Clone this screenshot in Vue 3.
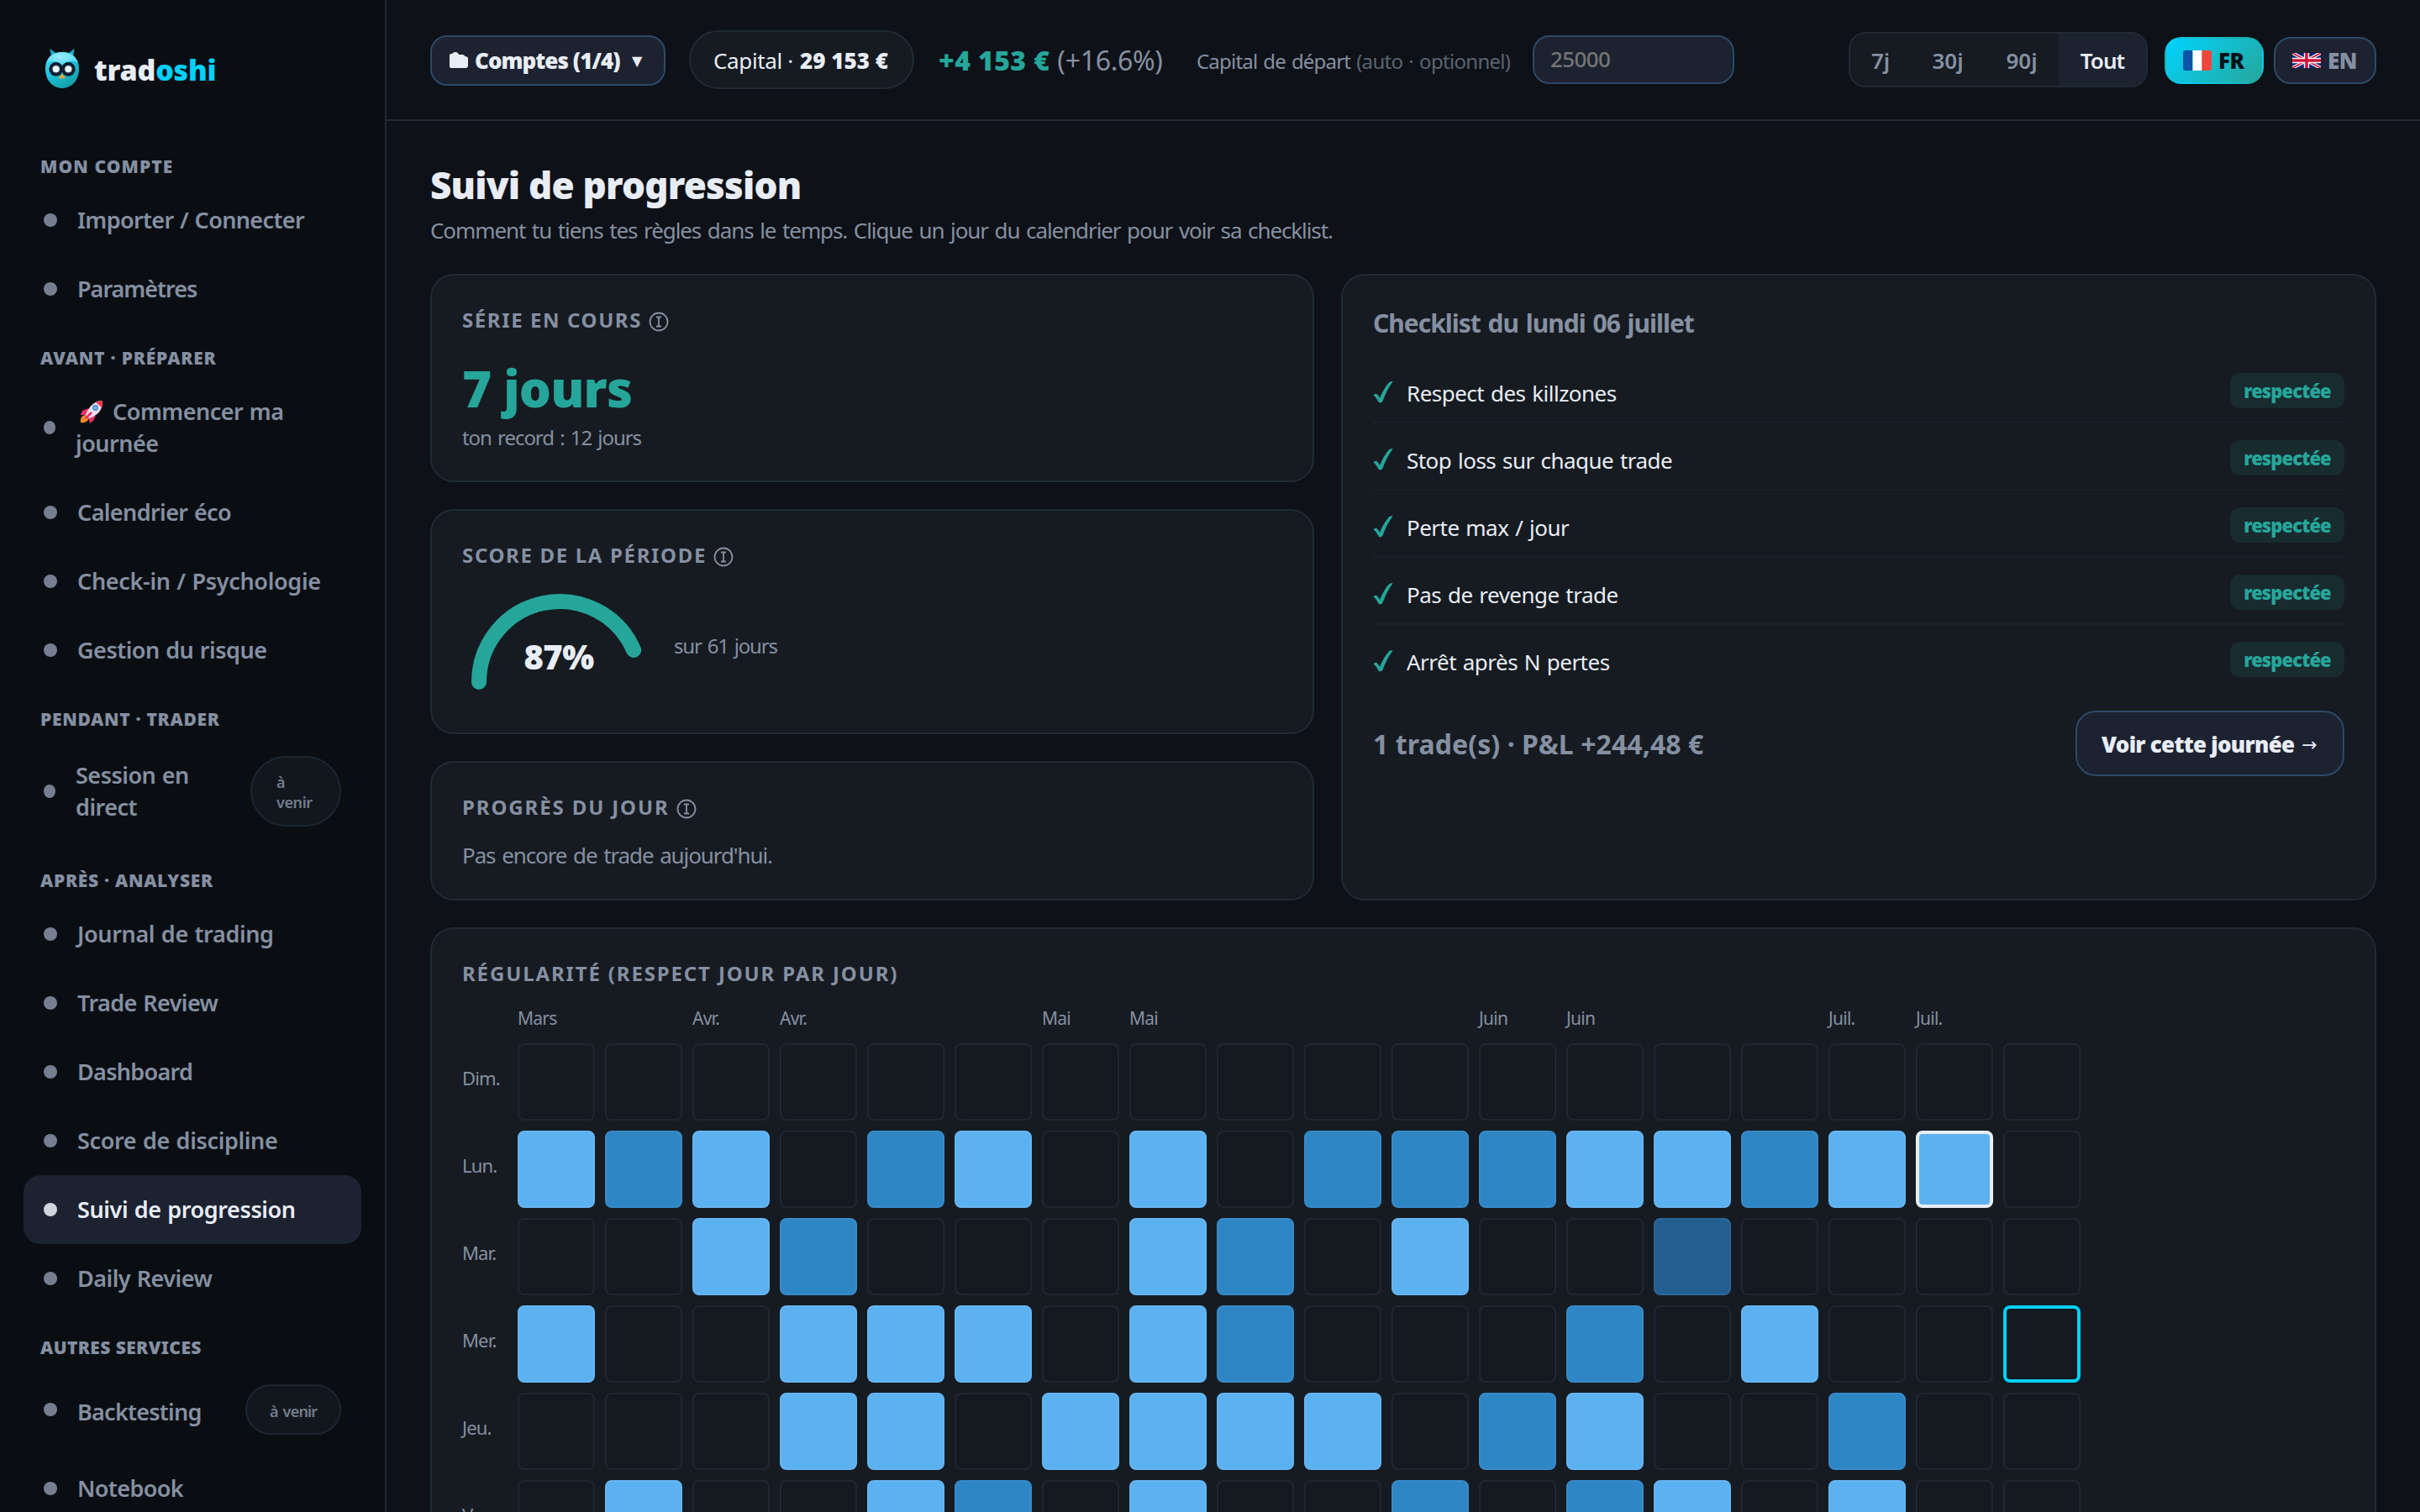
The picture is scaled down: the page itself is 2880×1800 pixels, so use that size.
<script setup>
const sections = [
  {
    label: 'Mon compte', ls: 1.1,
    items: [
      { lines: ['Importer / Connecter'], ls: -0.63 },
      { lines: ['Paramètres'], ls: -1 },
    ],
  },
  {
    label: 'Avant · Préparer', ls: 0.8,
    items: [
      { lines: ['Commencer ma', 'journée'], rocket: true, ls: -0.5 },
      { lines: ['Calendrier éco'], ls: -0.6 },
      { lines: ['Check-in / Psychologie'], ls: -0.32 },
      { lines: ['Gestion du risque'], ls: -0.5 },
    ],
  },
  {
    label: 'Pendant · Trader', ls: 0.7,
    items: [{ lines: ['Session en', 'direct'], soon: ['à', 'venir'], ls: -0.5 }],
  },
  {
    label: 'Après · Analyser', ls: 0.7,
    items: [
      { lines: ['Journal de trading'], ls: -0.35 },
      { lines: ['Trade Review'], ls: -0.58 },
      { lines: ['Dashboard'], ls: -0.7 },
      { lines: ['Score de discipline'], ls: -0.35 },
      { lines: ['Suivi de progression'], active: true, ls: -0.4 },
      { lines: ['Daily Review'], ls: -0.5 },
    ],
  },
  {
    label: 'Autres services', ls: 0.4,
    items: [
      { lines: ['Backtesting'], soon: ['à venir'], ls: -0.75 },
      { lines: ['Notebook'], ls: -0.6 },
    ],
  },
]

const rules = [
  'Respect des killzones',
  'Stop loss sur chaque trade',
  'Perte max / jour',
  'Pas de revenge trade',
  'Arrêt après N pertes',
]

const months = ['Mars', '', 'Avr.', 'Avr.', '', '', 'Mai', 'Mai', '', '', '', 'Juin', 'Juin', '', '', 'Juil.', 'Juil.', '']

// . = no trade, L = fully respected, M = mostly, D = partly, S = selected day, T = today
const days = [
  { name: 'Dim.', cells: '..................' },
  { name: 'Lun.', cells: 'LML.ML.L.MMMLLMLS.' },
  { name: 'Mar.', cells: '..LM...LM.L..D....' },
  { name: 'Mer.', cells: 'L..LLL.LM...M.L..T' },
  { name: 'Jeu.', cells: '...LL.LLLL.ML..M..' },
  { name: 'Ven.', cells: '.L..LM.L..M.ML.L..' },
  { name: 'Sam.', cells: '..................' },
]
const cellClass = { '.': '', L: 'full', M: 'most', D: 'part', S: 'full selected', T: 'today' }
</script>

<template>
  <div class="app">
    <aside class="sidebar">
      <div class="brand">
        <svg class="owl" viewBox="0 0 120 141">
          <defs>
            <linearGradient id="owlBody" x1="0" y1="0" x2="0.6" y2="1">
              <stop offset="0" stop-color="#4ddcf8" />
              <stop offset="0.5" stop-color="#22c3e0" />
              <stop offset="1" stop-color="#12a0aa" />
            </linearGradient>
            <radialGradient id="owlTop" cx="0.45" cy="0.35" r="0.6">
              <stop offset="0" stop-color="#9beefb" />
              <stop offset="1" stop-color="#55d8f2" />
            </radialGradient>
          </defs>
          <path d="M16 0 L40 17 L22 34 Z M104 0 L80 17 L98 34 Z" fill="#1fa9c6" />
          <path d="M60 12 C92 12 120 30 120 72 C120 112 94 141 60 141 C26 141 0 112 0 72 C0 30 28 12 60 12 Z" fill="url(#owlBody)" />
          <path d="M60 12 C88 12 108 26 116 50 C98 38 74 46 60 58 C46 46 22 38 4 50 C12 26 32 12 60 12 Z" fill="url(#owlTop)" />
          <circle cx="38" cy="73" r="25" fill="#111d2e" />
          <circle cx="82" cy="73" r="25" fill="#111d2e" />
          <circle cx="38" cy="73" r="15" fill="#31435a" />
          <circle cx="82" cy="73" r="15" fill="#31435a" />
          <circle cx="38" cy="73" r="12" fill="#eafaff" />
          <circle cx="82" cy="73" r="12" fill="#eafaff" />
          <path d="M60 89 L72 106 L48 106 Z" fill="#f5a52a" />
        </svg>
        <span class="word">trad<em>oshi</em></span>
      </div>

      <nav>
        <template v-for="s in sections" :key="s.label">
          <div class="label" :style="{ letterSpacing: s.ls + 'px' }">{{ s.label }}</div>
          <a
            v-for="it in s.items"
            :key="it.lines[0]"
            class="item"
            :class="{ active: it.active, double: it.lines.length > 1, pending: it.soon }"
          >
            <i class="dot"></i>
            <span class="text" :style="{ letterSpacing: it.ls + 'px' }">
              <span v-for="(l, n) in it.lines" :key="l" class="line"><svg v-if="it.rocket && n === 0" class="rocket" viewBox="0 0 28 27">
                <path d="M1 26 C0 20 3 17 8 17 L11 20 C10 25 6 27 1 26 Z" fill="#f08a24" />
                <path d="M10 9 L3 12 L1 17 L9 17 Z" fill="#e8316b" />
                <path d="M19 18 L16 24 L12 27 L10 19 Z" fill="#e8316b" />
                <path d="M27 0 C18 0 11 6 7 17 L11 21 C21 18 28 10 27 0 Z" fill="#f1dfe9" />
                <path d="M27 0 C24 0 21.500 1 19 2 L26 8 C27 6 27.500 3 27 0 Z" fill="#f0354a" />
                <path d="M13 13 L6 20 L8 22 L15 15 Z" fill="#e8316b" />
                <circle cx="18.500" cy="8.500" r="3.400" fill="#3f86dc" />
                <circle cx="18.500" cy="8.500" r="2" fill="#7db7f3" />
              </svg>{{ l }}</span>
            </span>
            <span v-if="it.soon" class="soon"><span v-for="w in it.soon" :key="w">{{ w }}</span></span>
          </a>
        </template>
      </nav>
    </aside>

    <div class="main">
      <header class="topbar">
        <button class="accounts">
          <svg class="folder" viewBox="0 0 24 20">
            <path d="M1 4 Q1 2 3 2 H4 Q5 0 8 0 Q11 0 12 3 H16 Q19 3 19 5 Q23 5 23 8 V16 Q23 19 20 19 H3 Q1 19 1 17 Z" fill="currentColor" />
          </svg>
          <span class="name">Comptes (1/4)</span><span class="caret">▼</span>
        </button>
        <div class="capital"><span>Capital ·</span><b>29 153 €</b></div>
        <div class="gain"><b>+4 153 €</b><span>(+16.6%)</span></div>
        <label class="start">Capital de départ <small>(auto · optionnel)</small></label>
        <input class="amount" type="text" placeholder="25000" />
        <div class="range">
          <span>7j</span><span>30j</span><span>90j</span><span class="on">Tout</span>
        </div>
        <button class="lang fr">
          <svg viewBox="0 0 34 24">
            <clipPath id="frClip"><rect width="34" height="24" rx="3" /></clipPath>
            <g clip-path="url(#frClip)">
              <rect width="11.500" height="24" fill="#0a55a8" />
              <rect x="11.500" width="11" height="24" fill="#fff" />
              <rect x="22.500" width="11.500" height="24" fill="#f4453c" />
            </g>
          </svg>
          <span>FR</span>
        </button>
        <button class="lang en">
          <svg class="uk" viewBox="0 0 34 18">
            <rect width="34" height="18" fill="#0b2472" />
            <path d="M0 0 L34 18 M34 0 L0 18" stroke="#f3f4f8" stroke-width="4" />
            <path d="M0 0 L34 18 M34 0 L0 18" stroke="#d3143a" stroke-width="1.600" />
            <path d="M17 0 V18 M0 9 H34" stroke="#f3f4f8" stroke-width="6.400" />
            <path d="M17 0 V18 M0 9 H34" stroke="#d3143a" stroke-width="3.600" />
          </svg>
          <span>EN</span>
        </button>
      </header>

      <main class="page">
        <h1>Suivi de progression</h1>
        <p class="lead">Comment tu tiens tes règles dans le temps. Clique un jour du calendrier pour voir sa checklist.</p>

        <div class="columns">
          <div class="left">
            <section class="card streak">
              <h2 class="cap">Série en cours<svg class="info" viewBox="0 0 24 24"><circle cx="12" cy="12" r="10.500" /><path d="M9 6.500 H15 M9 17.500 H15 M12 6.500 V17.500" /></svg></h2>
              <div class="big">7 jours</div>
              <div class="sub">ton record : 12 jours</div>
            </section>
            <section class="card score">
              <h2 class="cap wide">Score de la période<svg class="info" viewBox="0 0 24 24"><circle cx="12" cy="12" r="10.500" /><path d="M9 6.500 H15 M9 17.500 H15 M12 6.500 V17.500" /></svg></h2>
              <div class="gauge-row">
                <svg class="gauge" viewBox="0 0 232 132">
                  <path d="M20 108 A96 96 0 0 1 204.100 69.900" />
                  <text x="115" y="93">87%</text>
                </svg>
                <span class="sub">sur 61 jours</span>
              </div>
            </section>
            <section class="card today-card">
              <h2 class="cap widest">Progrès du jour<svg class="info" viewBox="0 0 24 24"><circle cx="12" cy="12" r="10.500" /><path d="M9 6.500 H15 M9 17.500 H15 M12 6.500 V17.500" /></svg></h2>
              <div class="empty">Pas encore de trade aujourd'hui.</div>
            </section>
          </div>

          <section class="card checklist">
            <h2>Checklist du lundi 06 juillet</h2>
            <ul>
              <li v-for="r in rules" :key="r">
                <svg class="tick" viewBox="0 0 24 26"><path d="M0.500 16.500 C2 14.500 4 14.500 5 15.500 C6.500 17 7.500 18.500 8 20 C11 12.500 15 5.500 19.500 1 C20.500 0 23 0 23.500 0.500 C18.500 7 14.500 15 11.500 23.500 C10.500 25.500 7.500 26 6.500 24.500 C5 21.500 3.500 18.500 0.500 16.500 Z" fill="currentColor" /></svg>
                <span class="rule">{{ r }}</span>
                <span class="badge">respectée</span>
              </li>
            </ul>
            <div class="foot">
              <span class="pnl">1 trade(s) · P&amp;L +244,48 €</span>
              <button class="view"><span>Voir cette journée</span><i>→</i></button>
            </div>
          </section>
        </div>

        <section class="card calendar">
          <h2 class="cap regular">Régularité (respect jour par jour)</h2>
          <div class="grid months">
            <span></span>
            <span v-for="(m, i) in months" :key="i">{{ m }}</span>
          </div>
          <div v-for="d in days" :key="d.name" class="grid week">
            <span class="day">{{ d.name }}</span>
            <i v-for="(c, i) in d.cells" :key="i" class="cell" :class="cellClass[c]"></i>
          </div>
        </section>
      </main>
    </div>
  </div>
</template>

<style>
html,
body {
  background: #0e1117;
  overflow: hidden;
}
</style>

<style scoped>
.app {
  display: flex;
  width: 2880px;
  height: 1800px;
  overflow: hidden;
  background: #0e1117;
  color: #e8edf5;
  font-family: "Noto Sans", "Open Sans", sans-serif;
  font-size: 26px;
  box-sizing: border-box;
}
.app * {
  box-sizing: border-box;
}
button {
  font: inherit;
  color: inherit;
  margin: 0;
  text-align: left;
}

/* Sidebar */
.sidebar {
  flex: none;
  width: 460px;
  height: 1800px;
  border-right: 2px solid #212a35;
  background: #0a0e13;
  overflow: hidden;
}
.brand {
  display: flex;
  height: 157px;
  padding: 58px 0 0 54px;
}
.owl {
  width: 40px;
  height: 47px;
}
.word {
  margin: 1px 0 0 18px;
  font-size: 34px;
  font-weight: 900;
  line-height: 48px;
  letter-spacing: -0.2px;
}
.word em {
  font-style: normal;
  color: #00d1ff;
}
.label {
  padding: 18px 0 0 48px;
  height: 64px;
  line-height: 46px;
  font-size: 21px;
  font-weight: 900;
  color: #8590a2;
  text-transform: uppercase;
}
.item {
  display: flex;
  align-items: center;
  height: 82px;
  margin: 0 28px;
  padding: 0 24px;
  border-radius: 20px;
  color: #8590a2;
  font-size: 27px;
  font-weight: 600;
  line-height: 38px;
  word-spacing: 1px;
  white-space: nowrap;
}
.item.double {
  height: 120px;
  padding-bottom: 1px;
}
.item.pending {
  height: 104px;
  padding-bottom: 2px;
}
.item.double.pending {
  height: 128px;
}
.item.active {
  background: #1c2230;
  color: #e8edf5;
}
.dot {
  flex: none;
  width: 16px;
  height: 16px;
  border-radius: 50%;
  background: currentColor;
  opacity: 0.88;
}
.double .dot {
  width: 14px;
}
.text {
  margin-left: 24px;
}
.pending:not(.double) .text {
  padding-top: 5px;
}
.line {
  display: block;
}
.rocket {
  width: 28px;
  height: 27px;
  margin: 0 11px 0 5px;
  vertical-align: -4px;
}
.soon {
  display: flex;
  flex-direction: column;
  justify-content: center;
  height: 60px;
  margin-left: auto;
  padding: 3px 27px 0;
  border: 2px solid #1d2530;
  border-radius: 42px;
  background: #12171e;
  color: #737d8c;
  width: 114px;
  font-size: 18px;
  line-height: 24px;
  letter-spacing: -0.8px;
  word-spacing: 2px;
}
.double .soon {
  width: 108px;
  height: 84px;
  padding: 2px 28px 0 29px;
  letter-spacing: -0.4px;
}

/* Top bar */
.main {
  flex: 1;
  min-width: 0;
}
.topbar {
  display: flex;
  align-items: center;
  height: 144px;
  padding: 0 52px;
  border-bottom: 2px solid #212a35;
  white-space: nowrap;
}
.accounts {
  display: flex;
  align-items: center;
  width: 280px;
  height: 60px;
  margin-top: 2px;
  padding: 0 0 0 20px;
  border: 2px solid #2c4a66;
  border-radius: 20px;
  background: #1c2230;
  font-weight: 900;
  letter-spacing: -0.95px;
}
.folder {
  width: 24px;
  height: 20px;
  margin-right: 7px;
}
.name {
  width: 187px;
}
.caret {
  font-family: "DejaVu Sans", sans-serif;
  font-size: 16px;
  letter-spacing: 0;
}
.capital {
  display: flex;
  align-items: center;
  gap: 8px;
  width: 268px;
  height: 70px;
  margin-left: 28px;
  padding: 2px 0 0 27px;
  border: 2px solid #212a35;
  border-radius: 35px;
  background: #161b21;
  letter-spacing: -0.35px;
}
.capital b {
  font-weight: 900;
  letter-spacing: 0;
}
.gain {
  display: flex;
  gap: 9px;
  width: 306px;
  margin-left: 29px;
  font-size: 32px;
  color: #8590a2;
  letter-spacing: -0.3px;
}
.gain b {
  color: #26a69a;
  font-weight: 900;
  letter-spacing: 0.4px;
}
.start {
  width: 400px;
  margin-left: 1px;
  padding-top: 3px;
  font-size: 24px;
  color: #8590a2;
  word-spacing: 1.5px;
  letter-spacing: -0.8px;
}
.start small {
  font-size: 24px;
  color: #5b6472;
  letter-spacing: -0.7px;
}
.amount {
  width: 240px;
  height: 58px;
  padding: 0 0 3px 19px;
  border: 2px solid #2c4a66;
  border-radius: 20px;
  background: #1c2230;
  font: 500 26px "Noto Sans", sans-serif;
  letter-spacing: -0.6px;
  outline: none;
}
.amount::placeholder {
  color: #757575;
  opacity: 1;
}
.range {
  display: flex;
  height: 66px;
  margin-left: auto;
  border: 2px solid #212a35;
  border-radius: 20px;
  background: #161b21;
  overflow: hidden;
  color: #8590a2;
  font-weight: 600;
}
.range span {
  width: 88px;
  padding-top: 1px;
  line-height: 62px;
  text-align: center;
}
.range span:first-child {
  width: 72px;
}
.range .on {
  width: 104px;
  background: #1c2230;
  color: #e8edf5;
  letter-spacing: -0.9px;
}
.lang {
  display: flex;
  align-items: center;
  height: 56px;
  margin-top: 2px;
  padding: 0 0 0 20px;
  border: 2px solid #2c4a66;
  border-radius: 20px;
  background: #1c2230;
  color: #8590a2;
  font-weight: 900;
  letter-spacing: -0.4px;
}
.lang svg {
  width: 34px;
  height: 24px;
  margin-right: 8px;
}
.lang svg.uk {
  height: 18px;
}
.fr {
  width: 118px;
  margin-left: 20px;
  border-color: transparent;
  background: linear-gradient(135deg, #00d4ff, #26a69a);
  color: #04131a;
}
.en {
  width: 122px;
  margin-left: 12px;
}

/* Page */
.page {
  padding: 46px 52px 0;
}
h1,
h2,
p,
ul {
  margin: 0;
  padding: 0;
}
h1 {
  font-size: 44px;
  font-weight: 900;
  line-height: 60px;
  letter-spacing: -0.8px;
}
.lead {
  margin-top: 6px;
  line-height: 36px;
  color: #8590a2;
  word-spacing: 2px;
  letter-spacing: -1.1px;
}
.columns {
  display: flex;
  gap: 32px;
  margin-top: 34px;
}
.left {
  display: flex;
  flex-direction: column;
  gap: 32px;
  width: 1052px;
}
.card {
  padding: 36px;
  border: 2px solid #212a35;
  border-radius: 28px;
  background: #161b21;
}
.cap {
  display: flex;
  align-items: center;
  height: 34px;
  font-size: 24px;
  font-weight: 700;
  line-height: 34px;
  letter-spacing: 1.6px;
  color: #8590a2;
  text-transform: uppercase;
}
.cap.wide {
  letter-spacing: 1.66px;
}
.cap.widest {
  letter-spacing: 1.88px;
}
.cap.regular {
  letter-spacing: 1.86px;
}
.info {
  width: 24px;
  height: 24px;
  margin: 3px 0 0 8px;
  fill: none;
  stroke: currentColor;
  stroke-width: 1.8;
}
.streak {
  height: 248px;
}
.big {
  margin-top: 29px;
  font-size: 60px;
  font-weight: 900;
  line-height: 70px;
  letter-spacing: -0.8px;
  color: #26a69a;
}
.sub {
  font-size: 24px;
  line-height: 32px;
  word-spacing: 2px;
  letter-spacing: -1.05px;
  color: #8590a2;
}
.streak .sub {
  margin-top: 8px;
}
.score {
  height: 268px;
}
.gauge-row {
  display: flex;
  align-items: center;
  gap: 20px;
  margin-top: 26px;
}
.gauge-row .sub {
  margin-top: -2px;
  letter-spacing: -1.2px;
}
.gauge {
  width: 232px;
  height: 132px;
}
.gauge path {
  fill: none;
  stroke: #26a69a;
  stroke-width: 18;
  stroke-linecap: round;
}
.gauge text {
  fill: #e8edf5;
  font-size: 40px;
  font-weight: 900;
  text-anchor: middle;
  letter-spacing: -0.6px;
}
.today-card {
  height: 166px;
}
.empty {
  margin-top: 24px;
  line-height: 32px;
  word-spacing: 2px;
  letter-spacing: -1.1px;
  color: #8590a2;
}
.checklist {
  flex: 1;
}
.checklist h2 {
  height: 60px;
  font-size: 30px;
  font-weight: 700;
  line-height: 42px;
  word-spacing: 2px;
  letter-spacing: -1px;
  color: #8590a2;
}
.checklist li {
  display: flex;
  align-items: center;
  height: 80px;
  padding-top: 2px;
  border-bottom: 2px solid #1b212a;
}
.checklist li:last-child {
  height: 78px;
  padding-bottom: 0;
  border-bottom: 0;
}
.tick {
  width: 24px;
  height: 26px;
  margin-top: 5px;
  color: #26a69a;
}
.rule {
  padding-top: 7px;
  margin-left: 16px;
  word-spacing: 1.5px;
  letter-spacing: -0.52px;
}
.badge {
  width: 136px;
  height: 42px;
  margin: 2px 0 0 auto;
  padding-top: 1px;
  border-radius: 12px;
  background: #182b2f;
  color: #26a69a;
  font-size: 22px;
  font-weight: 900;
  line-height: 40px;
  letter-spacing: -0.9px;
  text-align: center;
}
.foot {
  display: flex;
  align-items: center;
  justify-content: space-between;
  margin-top: 24px;
}
.pnl {
  padding-top: 1px;
  font-size: 32px;
  font-weight: 700;
  letter-spacing: 0.08px;
  color: #8590a2;
}
.view {
  display: flex;
  align-items: center;
  width: 320px;
  height: 78px;
  padding: 2px 0 0 29px;
  border: 2px solid #2c4a66;
  border-radius: 24px;
  background: #1c2230;
  font-weight: 900;
  letter-spacing: -0.73px;
}
.view i {
  margin-left: 9px;
  font: 400 22px "DejaVu Sans", sans-serif;
}

/* Calendar */
.calendar {
  height: 960px;
  margin-top: 32px;
}
.grid {
  display: grid;
  grid-template-columns: 54px repeat(18, 92px);
  column-gap: 12px;
}
.months {
  height: 32px;
  margin: 20px 0 14px;
  font-size: 21px;
  line-height: 32px;
  letter-spacing: -0.75px;
  color: #8590a2;
}
.week {
  margin-bottom: 12px;
}
.day {
  height: 92px;
  font-size: 22px;
  line-height: 83px;
  letter-spacing: -0.85px;
  color: #8590a2;
}
.cell {
  height: 92px;
  border: 2px solid #1f2732;
  border-radius: 8px;
  background: #151a21;
}
.cell.full {
  border-color: #66b5f0;
  background: #5cb1f0;
}
.cell.most {
  border-color: #388bc9;
  background: #2e86c5;
}
.cell.part {
  border-color: #2c6796;
  background: #225f90;
}
.cell.selected {
  border: 4px solid #e8edf5;
}
.cell.today {
  border: 4px solid #00d1ff;
}
</style>
